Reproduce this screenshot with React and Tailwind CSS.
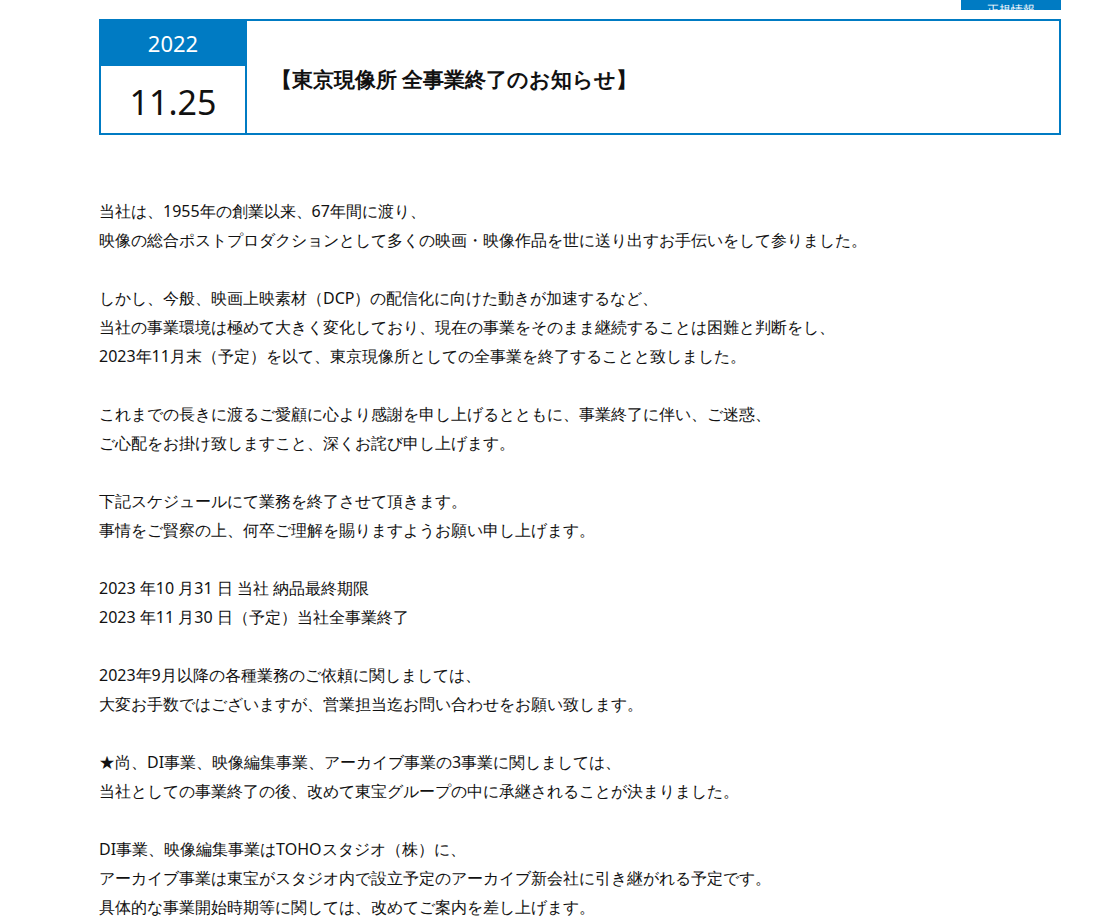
import React from 'react';

const paras = [
  ['当社は、1955年の創業以来、67年間に渡り、', '映像の総合ポストプロダクションとして多くの映画・映像作品を世に送り出すお手伝いをして参りました。'],
  ['しかし、今般、映画上映素材（DCP）の配信化に向けた動きが加速するなど、', '当社の事業環境は極めて大きく変化しており、現在の事業をそのまま継続することは困難と判断をし、', '2023年11月末（予定）を以て、東京現像所としての全事業を終了することと致しました。'],
  ['これまでの長きに渡るご愛顧に心より感謝を申し上げるとともに、事業終了に伴い、ご迷惑、', 'ご心配をお掛け致しますこと、深くお詫び申し上げます。'],
  ['下記スケジュールにて業務を終了させて頂きます。', '事情をご賢察の上、何卒ご理解を賜りますようお願い申し上げます。'],
  ['2023 年10 月31 日 当社 納品最終期限', '2023 年11 月30 日（予定）当社全事業終了'],
  ['2023年9月以降の各種業務のご依頼に関しましては、', '大変お手数ではございますが、営業担当迄お問い合わせをお願い致します。'],
  ['★尚、DI事業、映像編集事業、アーカイブ事業の3事業に関しましては、', '当社としての事業終了の後、改めて東宝グループの中に承継されることが決まりました。'],
  ['DI事業、映像編集事業はTOHOスタジオ（株）に、', 'アーカイブ事業は東宝がスタジオ内で設立予定のアーカイブ新会社に引き継がれる予定です。', '具体的な事業開始時期等に関しては、改めてご案内を差し上げます。'],
];

export default function App() {
  return (
    <div className="bg-white min-h-[919px] font-['Noto_Sans_CJK_JP',sans-serif] text-[#111]">
      <div className="ml-[99px] w-[962px]">
        <div className="flex justify-end">
          <div className="w-[100px] h-[10px] bg-[#007bc3] overflow-hidden flex items-end justify-center">
            <span className="text-white text-[12px] leading-none translate-y-[6px]">正規情報</span>
          </div>
        </div>
        <div className="mt-[9px] flex border-2 border-[#007bc3] h-[116px]">
          <div className="w-[146px] flex flex-col border-r-2 border-[#007bc3]">
            <div className="h-[45px] bg-[#007bc3] text-white text-[22px] flex items-center justify-center font-['Noto_Sans_CJK_JP',sans-serif]">2022</div>
            <div className="flex-1 flex items-center justify-center text-[34px] pt-[6px] font-['Noto_Sans_CJK_JP',sans-serif]">11.25</div>
          </div>
          <div className="flex-1 pl-[24px] pt-[43px] text-[21px] font-bold leading-[30px]">【東京現像所 全事業終了のお知らせ】</div>
        </div>
        <div className="mt-[62px] text-[16px] leading-[29px] flex flex-col gap-[29px]">
          {paras.map((p, i) => (
            <div key={i}>{p.map((l, j) => <div key={j}>{l}</div>)}</div>
          ))}
        </div>
      </div>
    </div>
  );
}
